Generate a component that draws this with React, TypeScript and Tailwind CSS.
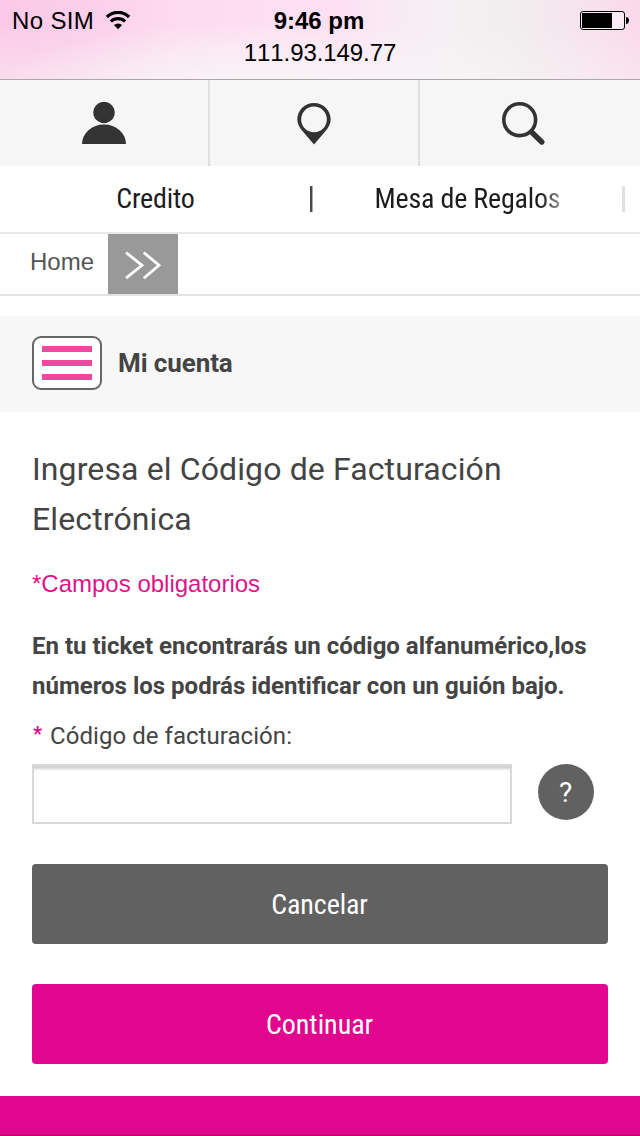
function WifiIcon() {
  return (
    <svg className="mt-[11px] ml-[11px] h-[19px] w-[26px] self-start" viewBox="0 0 26 19" fill="none" stroke="#000">
      <path d="M1.900 6A15.600 15.600 0 0 1 24.100 6" strokeWidth="3.300" />
      <path d="M5.900 10.500A10.200 10.200 0 0 1 20.100 10.500" strokeWidth="3.100" />
      <path d="M13 18.300 8.900 14.100A5.800 5.800 0 0 1 17.100 14.100Z" fill="#000" stroke="none" />
    </svg>
  );
}

function BatteryIcon() {
  return (
    <svg className="mt-[11px] h-[19px] w-[50px]" viewBox="0 0 50 19">
      <rect x="0.5" y="0.5" width="44" height="18" rx="2.5" fill="#fff" fillOpacity="0.4" stroke="#000" />
      <rect x="2" y="2" width="30" height="15" fill="#000" />
      <path d="M46 6c1.800 0 3 1.500 3 3.500S47.800 13 46 13Z" fill="#000" />
    </svg>
  );
}

function StatusBar() {
  return (
    <header className="h-20 border-b border-[#aaa6a9] bg-[radial-gradient(ellipse_280px_75px_at_270px_95px,#f8f4f6_15%,rgba(248,244,246,0)_100%),linear-gradient(to_bottom,rgba(248,246,247,0)_30%,rgba(248,246,247,0.4)_100%),linear-gradient(to_right,#fbc9e7_0%,#fbcfea_14%,#fddaee_26%,#fedef2_42%,#fddef2_52%,#f9e9f4_60%,#f5f0f3_70%,#f0eeef_80%,#f6e4ed_90%,#fbd8ea_100%)] font-['Liberation_Sans',sans-serif] text-2xl text-black">
      <div className="grid h-[41px] grid-cols-3 leading-[41px]">
        <div className="flex pl-3">
          <span className="tracking-[0.35px]">No SIM</span>
          <WifiIcon />
        </div>
        <p className="pr-0.5 text-center font-bold">9:46 pm</p>
        <div className="flex justify-end pr-[10px]">
          <BatteryIcon />
        </div>
      </div>
      <p className="text-center leading-6 tracking-[-0.08px] [font-kerning:none]">111.93.149.77</p>
    </header>
  );
}

function Toolbar() {
  return (
    <nav className="flex h-[86px] bg-[#f6f6f6]">
      <a className="w-[210px] border-r-2 border-[#dfdfdf] pl-[82px] pt-[22px]">
        <svg className="h-[42px] w-11" viewBox="0 0 44 42" fill="#333">
          <circle cx="22" cy="10.500" r="10.700" />
          <path d="M0 42A22 19.500 0 0 1 44 42Z" />
        </svg>
      </a>
      <a className="w-[210px] border-r-2 border-[#dfdfdf] pl-[87px] pt-[22px]">
        <svg className="h-[44px] w-[34px]" viewBox="0 0 34 44">
          <path
            fill="#333"
            fillRule="evenodd"
            d="M17 1C7.800 1 0.300 8.300 0.300 17.500C0.300 21.500 2.300 25 5 28.600L17 42.600L29 28.600C31.700 25 33.700 21.500 33.700 17.500C33.700 8.300 26.200 1 17 1ZM17 4.600A12.800 12.800 0 1 1 17 30.200A12.800 12.800 0 1 1 17 4.600Z"
          />
        </svg>
      </a>
      <a className="flex-1 pl-[82px] pt-[22px]">
        <svg className="h-11 w-11" viewBox="0 0 44 44" fill="none" stroke="#333">
          <circle cx="17.700" cy="17.700" r="15.900" strokeWidth="3.600" />
          <path d="M29.500 30L39.800 40" strokeWidth="5.400" strokeLinecap="round" />
        </svg>
      </a>
    </nav>
  );
}

function Categories() {
  return (
    <nav className="flex h-[68px] items-center border-b-2 border-[#e8e8e8] pb-px font-['Roboto_Condensed',Roboto,sans-serif] text-[28px] leading-[34px] tracking-[-0.2px] text-[#1c1c1c]">
      <a className="w-[310px] pl-px text-center">Credito</a>
      <span className="h-[26px] w-[3px] border-r border-[#aaa] bg-[#4a4a4a]" />
      <a className="w-[309px] text-center">
        <span className="bg-[linear-gradient(to_right,#1c1c1c_90%,#999_100%)] bg-clip-text text-transparent">Mesa de Regalos</span>
      </a>
      <span className="h-[26px] w-[3px] bg-[#dfdfdf]" />
    </nav>
  );
}

function Breadcrumb() {
  return (
    <div className="flex h-[62px] border-b-2 border-[#e2e2e2]">
      <a className="w-[108px] pl-[30px] font-['Liberation_Sans',sans-serif] text-2xl leading-[56px] text-[#555]">Home</a>
      <span className="h-[60px] w-[70px] bg-[#999]">
        <svg className="h-[60px] w-[70px]" viewBox="0 0 70 60" fill="none" stroke="#fff" strokeWidth="2.800">
          <path d="M18 18.500L34 31.300L18 44.200M35.700 18.500L51 31.300L35.700 44.200" />
        </svg>
      </span>
    </div>
  );
}

function AccountBar() {
  return (
    <div className="mt-5 flex h-24 items-center bg-[#f7f7f7] pl-8">
      <button className="mb-0.5 flex h-[54px] w-[70px] flex-col items-center gap-2 rounded-[9px] border-2 border-[#666] bg-white pt-2">
        <span className="h-1.5 w-[50px] bg-[#ef479f]" />
        <span className="h-1.5 w-[50px] bg-[#ef479f]" />
        <span className="h-1.5 w-[50px] bg-[#ef479f]" />
      </button>
      <h2 className="mb-0.5 ml-4 text-[26px] leading-8 font-bold tracking-[-0.1px]">Mi cuenta</h2>
    </div>
  );
}

function InvoiceForm() {
  return (
    <main className="h-[684px] px-8 pt-8">
      <h1 className="text-[32px] leading-[50px] tracking-[0.12px]">
        Ingresa el Código de Facturación
        <br />
        Electrónica
      </h1>
      <p className="mt-[25px] font-['Liberation_Sans',sans-serif] text-2xl leading-[30px] text-[#dc1488]">*Campos obligatorios</p>
      <p className="mt-[27px] text-2xl leading-10 font-bold whitespace-nowrap">
        En tu ticket encontrarás un código alfanumérico,los
        <br />
        números los podrás identificar con un guión bajo.
      </p>
      <label className="mt-[14px] flex text-2xl leading-8 tracking-[0.05px]">
        <span className="w-[18px] pl-px text-[20px] leading-[29px] font-bold text-[#e2058e]">*</span>
        Código de facturación:
      </label>
      <div className="mt-3 flex gap-[26px]">
        <input className="h-[60px] w-[480px] border-2 border-[#d8d8d8] bg-white px-2 text-2xl shadow-[inset_0_5px_3px_-2px_#cfcfcf] outline-none" />
        <button className="h-14 w-14 rounded-full bg-[#616161] pt-0.5 pr-px text-[28px] leading-[54px] text-white">?</button>
      </div>
      <div className="mt-10 grid gap-10 font-['Roboto_Condensed',Roboto,sans-serif] text-[28px] text-white">
        <button className="h-20 rounded bg-[#616161] pt-0.5 pr-px tracking-[-0.1px]">Cancelar</button>
        <button className="h-20 rounded bg-[#e2058e] pt-0.5 pr-px">Continuar</button>
      </div>
    </main>
  );
}

export default function App() {
  return (
    <div className="h-[1136px] w-[640px] overflow-hidden bg-white font-[Roboto,sans-serif] text-[#444]">
      <StatusBar />
      <Toolbar />
      <Categories />
      <Breadcrumb />
      <AccountBar />
      <InvoiceForm />
      <footer className="h-10 border-b border-[#8c0a5a] bg-[#e2058e]" />
    </div>
  );
}
